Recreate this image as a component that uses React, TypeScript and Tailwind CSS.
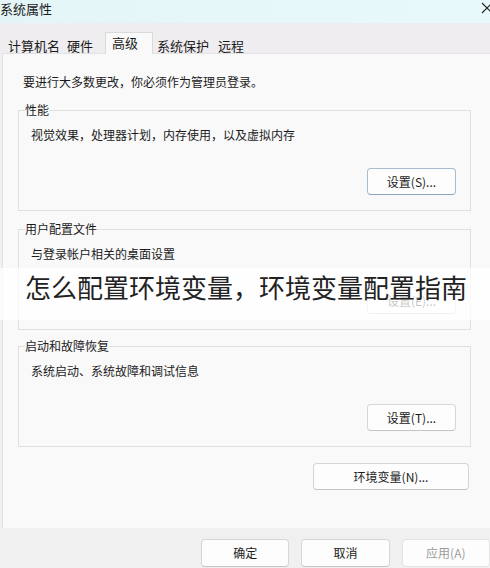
// System Properties dialog – "高级" tab, with a caption band across it
const font = { fontFamily: '"Noto Sans CJK SC", "Noto Sans", sans-serif' };

function Btn({
  label,
  className = "",
  disabled = false,
  focused = false,
}: {
  label: string;
  className?: string;
  disabled?: boolean;
  focused?: boolean;
}) {
  return (
    <button
      className={`flex items-center justify-center rounded-[4px] border bg-[#fdfdfd] text-[12px] leading-none ${
        focused
          ? "border-[#a9bccd] border-b-[#8ea6bb]"
          : disabled
            ? "border-[#e3e3e3] text-[#9c9c9c]"
            : "border-[#d6d6d6] border-b-[#c4c4c4]"
      } ${disabled ? "" : "text-[#1b1b1b]"} ${className}`}
    >
      {label}
    </button>
  );
}

function Group({
  title,
  text,
  button,
  focused = false,
  className = "",
}: {
  title: string;
  text: string;
  button: string;
  focused?: boolean;
  className?: string;
}) {
  return (
    <fieldset
      className={`ml-[15px] w-[453px] border border-[#e0e0e0] pl-[6px] pr-[14px] pb-[15px] ${className}`}
    >
      <legend className="px-0 text-[12px] leading-[16px] text-[#1b1b1b]">{title}</legend>
      <div className="mt-[9px] pl-[6px] text-[12px] leading-[16px] text-[#1b1b1b]">{text}</div>
      <div className="mt-[25px] flex justify-end">
        <Btn label={button} focused={focused} className="h-[27px] w-[89px]" />
      </div>
    </fieldset>
  );
}

export default function App() {
  const tabs = [
    { name: "计算机名", ml: "ml-[8px]" },
    { name: "硬件", ml: "ml-[7px]" },
  ];
  const tabsAfter = [
    { name: "系统保护", ml: "ml-[4px]" },
    { name: "远程", ml: "ml-[9px]" },
  ];

  return (
    <div
      className="relative h-[568px] w-[490px] overflow-hidden bg-[#f0f0f0] text-[#1b1b1b]"
      style={font}
    >
      {/* title bar */}
      <div className="flex h-[23px] items-start justify-between bg-gradient-to-r from-[#e4f5f8] to-[#e7f9fb]">
        <span className="mt-[1px] text-[13px] leading-[15px]">系统属性</span>
        <svg width="12" height="12" viewBox="0 0 12 12" className="mr-[-3px] mt-[2px]">
          <path d="M1 1 L11 11 M11 1 L1 11" stroke="#222" strokeWidth="1.1" />
        </svg>
      </div>

      {/* tab strip */}
      <div className="flex h-[30px] items-end bg-[#efedf0]">
        {tabs.map((t) => (
          <span key={t.name} className={`${t.ml} flex h-[18px] items-center pt-[3px] text-[13px] leading-none`}>
            {t.name}
          </span>
        ))}
        <span className="relative z-10 -mb-px ml-[12px] flex h-[22px] w-[48px] items-center border border-b-0 border-[#dadada] bg-[#f9f9f9] pb-[2px] pl-[6px] text-[13px] leading-none">
          高级
        </span>
        {tabsAfter.map((t) => (
          <span key={t.name} className={`${t.ml} flex h-[18px] items-center pt-[3px] text-[13px] leading-none`}>
            {t.name}
          </span>
        ))}
      </div>

      {/* tab page */}
      <div className="ml-[2px] flex h-[475px] flex-col border-l border-t border-[#e2e2e2] bg-[#f9f9f9]">
        <p className="ml-[20px] mt-[20px] text-[12px] leading-[16px]">
          要进行大多数更改，你必须作为管理员登录。
        </p>

        <Group
          className="mt-[12px]"
          title="性能"
          text="视觉效果，处理器计划，内存使用，以及虚拟内存"
          button="设置(S)..."
          focused
        />
        <Group
          className="mt-[10px]"
          title="用户配置文件"
          text="与登录帐户相关的桌面设置"
          button="设置(E)..."
        />
        <Group
          className="mt-[8px]"
          title="启动和故障恢复"
          text="系统启动、系统故障和调试信息"
          button="设置(T)..."
        />

        <div className="mt-[16px] flex">
          <Btn label="环境变量(N)..." className="ml-[310px] h-[27px] w-[156px]" />
        </div>
      </div>

      {/* dialog buttons */}
      <div className="flex gap-[12px] pl-[201px] pt-[11px]">
        <Btn label="确定" className="h-[28px] w-[90px]" />
        <Btn label="取消" className="h-[28px] w-[90px]" />
        <Btn label="应用(A)" disabled className="h-[28px] w-[90px]" />
      </div>

      {/* caption band laid over the dialog */}
      <div className="absolute left-0 right-0 top-[268px] h-[52px] bg-white/75">
        <div className="ml-[25px] mt-[4px] text-[26px] leading-[30px] text-[#222]">
          怎么配置环境变量，环境变量配置指南
        </div>
      </div>
    </div>
  );
}
